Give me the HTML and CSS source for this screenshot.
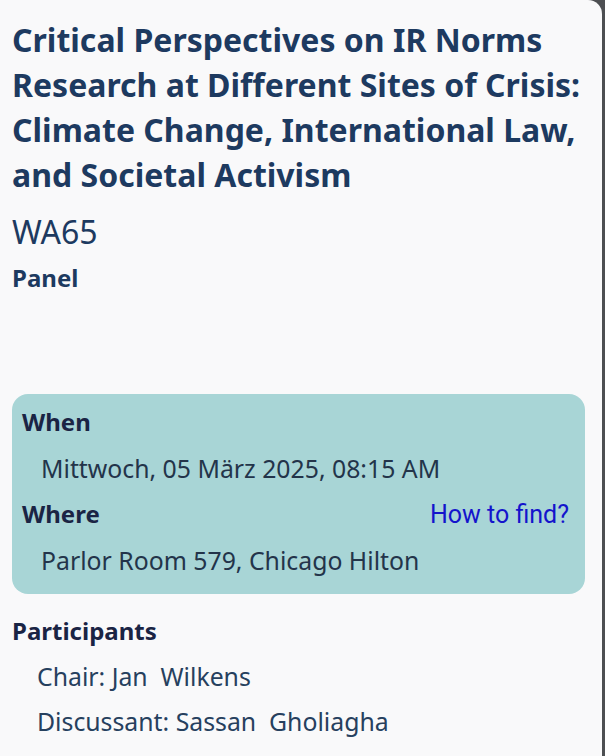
FILE: index.html
```html
<!DOCTYPE html>
<html lang="en">
<head>
<meta charset="utf-8">
<title>WA65</title>
<link rel="stylesheet" href="styles.css">
</head>
<body>
<div class="sheet">
  <h1 class="title">Critical Perspectives on IR Norms Research at Different Sites of Crisis: Climate Change, International Law, and Societal Activism</h1>
  <div class="code">WA65</div>
  <div class="type">Panel</div>
  <div class="card">
    <div class="label">When</div>
    <div class="value">Mittwoch, 05 März 2025, 08:15 AM</div>
    <div class="label-row">
      <span class="label">Where</span>
      <a class="link" href="#">How to find?</a>
    </div>
    <div class="value">Parlor Room 579, Chicago Hilton</div>
  </div>
  <div class="participants">
    <div class="label">Participants</div>
    <div class="person">Chair: Jan&nbsp; Wilkens</div>
    <div class="person">Discussant: Sassan&nbsp; Gholiagha</div>
  </div>
</div>
</body>
</html>
```
FILE: styles.css
```css
html, body {
  margin: 0;
  padding: 0;
  height: 100%;
}
body {
  background: #4d4f52;
  overflow: hidden;
  font-family: "Noto Sans", "Open Sans", sans-serif;
}
.sheet {
  width: 602px;
  height: 100%;
  background: #f9f9fa;
  border-top-right-radius: 14px;
  box-sizing: border-box;
  padding: 17px 0 0 12px;
}
.title {
  margin: 0;
  font-size: 32px;
  font-weight: 700;
  line-height: 45px;
  color: #1d3a60;
  padding-right: 8px;
}
.code {
  margin-top: 12px;
  font-size: 32px;
  line-height: 46px;
  color: #1d3a60;
}
.type {
  margin-top: 3px;
  font-size: 24px;
  font-weight: 700;
  line-height: 40px;
  color: #1d3a60;
}
.card {
  margin-top: 96px;
  width: 573px;
  box-sizing: border-box;
  background: #a8d5d6;
  border-radius: 16px;
  padding: 5px 16px 11px 10px;
}
.label {
  font-size: 24px;
  font-weight: 700;
  line-height: 46px;
  color: #1a2444;
}
.label-row {
  display: flex;
  justify-content: space-between;
  align-items: baseline;
}
.link {
  font-family: Roboto, sans-serif;
  font-size: 25px;
  color: #1414cc;
  text-decoration: none;
}
.value {
  padding-left: 19px;
  font-size: 24.8px;
  line-height: 46px;
  color: #23344a;
}
.participants {
  margin-top: 14px;
}
.person {
  padding-left: 25px;
  font-size: 24.8px;
  line-height: 45px;
  color: #26405e;
}
```
